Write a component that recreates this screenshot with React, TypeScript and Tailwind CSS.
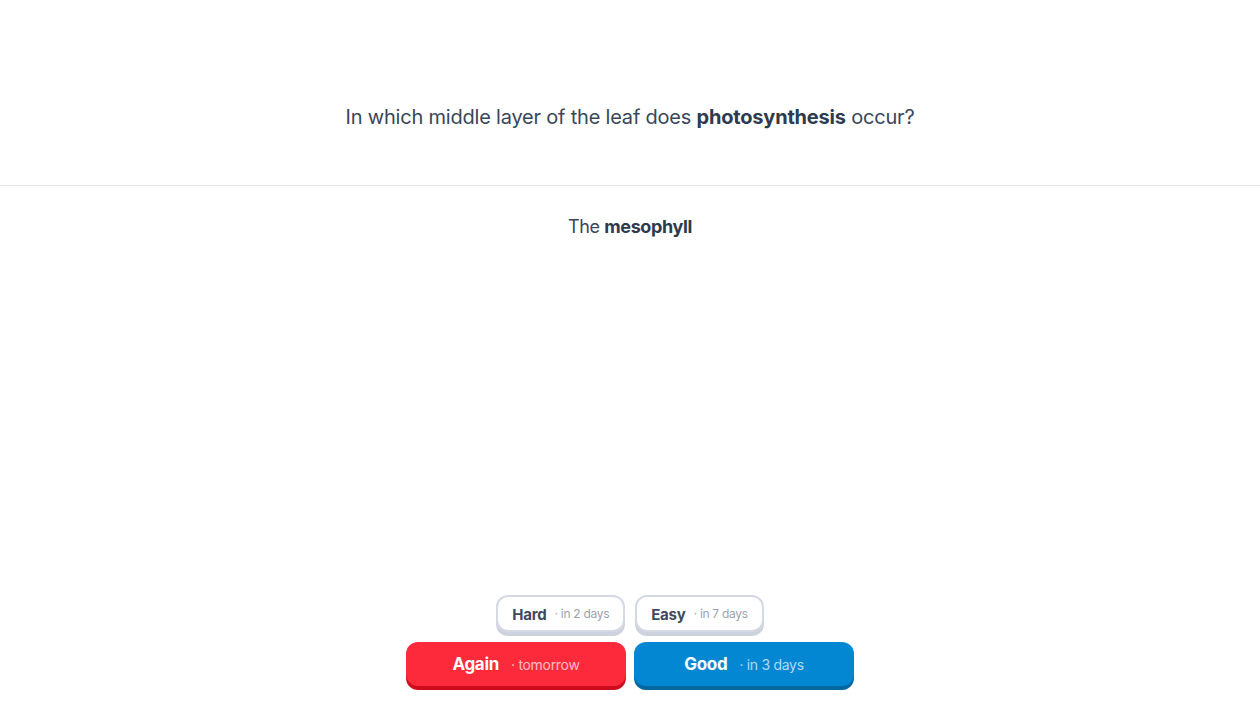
import React from 'react';

const font = { fontFamily: 'Inter, "Noto Sans", sans-serif' };

function SmallButton({ label, when }: { label: string; when: string }) {
    return (
        <button className="flex items-center justify-center gap-2 h-[37px] px-[14px] rounded-[12px] border-2 border-[#d5d9e3] bg-white shadow-[0_4px_0_#cdd2df] text-[#3d4a5c]">
            <span className="mt-[4px] text-[15px] font-bold tracking-[-0.2px]">{label}</span>
            <span className="text-[12px] text-[#9aa3b1] tracking-[-0.3px]">· {when}</span>
        </button>
    );
}

function BigButton({ label, when, bg, shade }: { label: string; when: string; bg: string; shade: string }) {
    return (
        <button className={`flex items-center justify-center gap-3 w-[220px] h-[44px] rounded-[12px] text-white ${bg} ${shade}`}>
            <span className="mt-[2px] text-[17px] font-bold tracking-[-0.3px]">{label}</span>
            <span className="text-[14px] text-white/70 tracking-[-0.3px]">· {when}</span>
        </button>
    );
}

export default function App() {
    return (
        <div className="w-full h-[709px] bg-white flex flex-col" style={font}>
            {/* Question */}
            <div className="h-[186px] flex justify-center border-b border-[#e5e7eb] pt-[103px]">
                <p className="text-[20px] leading-[28px] h-[28px] text-[#3a4659] tracking-[-0.2px]">
                    In which middle layer of the leaf does <b className="font-bold text-[#2e3a4d]">photosynthesis</b> occur?
                </p>
            </div>

            {/* Answer */}
            <div className="flex justify-center pt-[27px]">
                <p className="text-[18px] text-[#3a4659] tracking-[-0.4px]">
                    The <b className="font-bold text-[#2e3a4d]">mesophyll</b>
                </p>
            </div>

            <div className="flex-1" />

            {/* Rating buttons */}
            <div className="flex flex-col items-center gap-[10px] pb-[23px]">
                <div className="flex gap-[10px]">
                    <SmallButton label="Hard" when="in 2 days" />
                    <SmallButton label="Easy" when="in 7 days" />
                </div>
                <div className="flex gap-[8px]">
                    <BigButton label="Again" when="tomorrow" bg="bg-[#fc2a3a]" shade="shadow-[0_4px_0_#cc0c1a]" />
                    <BigButton label="Good" when="in 3 days" bg="bg-[#0387d3]" shade="shadow-[0_4px_0_#05679f]" />
                </div>
            </div>
        </div>
    );
}
